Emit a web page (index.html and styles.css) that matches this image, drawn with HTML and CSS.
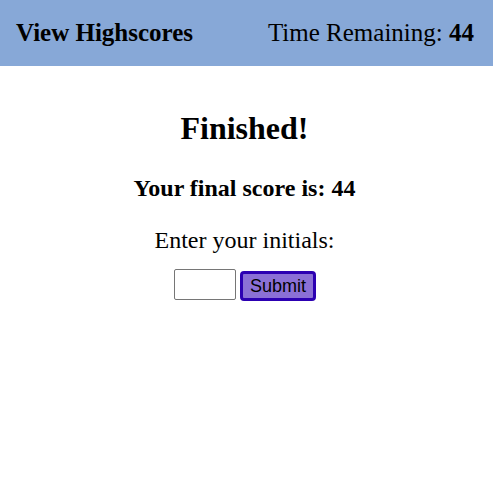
FILE: index.html
```html
<!DOCTYPE html>
<html>
<head>
<meta charset="utf-8">
<link rel="stylesheet" href="styles.css">
</head>
<body>
<header class="topbar">
  <a class="highscores">View Highscores</a>
  <div class="timer">Time Remaining: <b>44</b></div>
</header>
<main class="finish">
  <h1 class="title">Finished!</h1>
  <h2 class="score">Your final score is: 44</h2>
  <p class="prompt">Enter your initials:</p>
  <form class="entry">
    <input class="initials" type="text">
    <button class="submit" type="button">Submit</button>
  </form>
</main>
</body>
</html>
```
FILE: styles.css
```css
html, body {
  margin: 0;
  padding: 0;
  background: #fff;
  font-family: "Liberation Serif", "Times New Roman", serif;
  color: #000;
}
.topbar {
  display: flex;
  justify-content: space-between;
  align-items: center;
  height: 66px;
  padding: 0 19px 0 16px;
  background: #87a8d7;
  font-size: 25px;
}
.highscores {
  font-weight: bold;
}
.finish {
  display: flex;
  flex-direction: column;
  align-items: center;
  padding-right: 4px;
}
.title {
  margin: 42px 0 0;
  font-size: 32px;
  line-height: 40px;
}
.score {
  margin: 25px 0 0;
  font-size: 24px;
  line-height: 30px;
}
.prompt {
  margin: 22px 0 0;
  font-size: 24px;
  line-height: 30px;
}
.entry {
  display: flex;
  align-items: flex-start;
  gap: 4px;
  margin: 14px 0 0 1px;
}
.initials {
  box-sizing: border-box;
  width: 62px;
  height: 31px;
  padding: 1px 2px;
  border: 1px solid #767676;
  border-radius: 2px;
}
.submit {
  box-sizing: border-box;
  margin-top: 2px;
  width: 76px;
  height: 30px;
  padding: 0;
  font-family: "Liberation Sans", Arial, sans-serif;
  font-size: 18px;
  background: #8b70d6;
  border: 3px solid #2c00b2;
  border-radius: 4px;
  color: #000;
}
```
